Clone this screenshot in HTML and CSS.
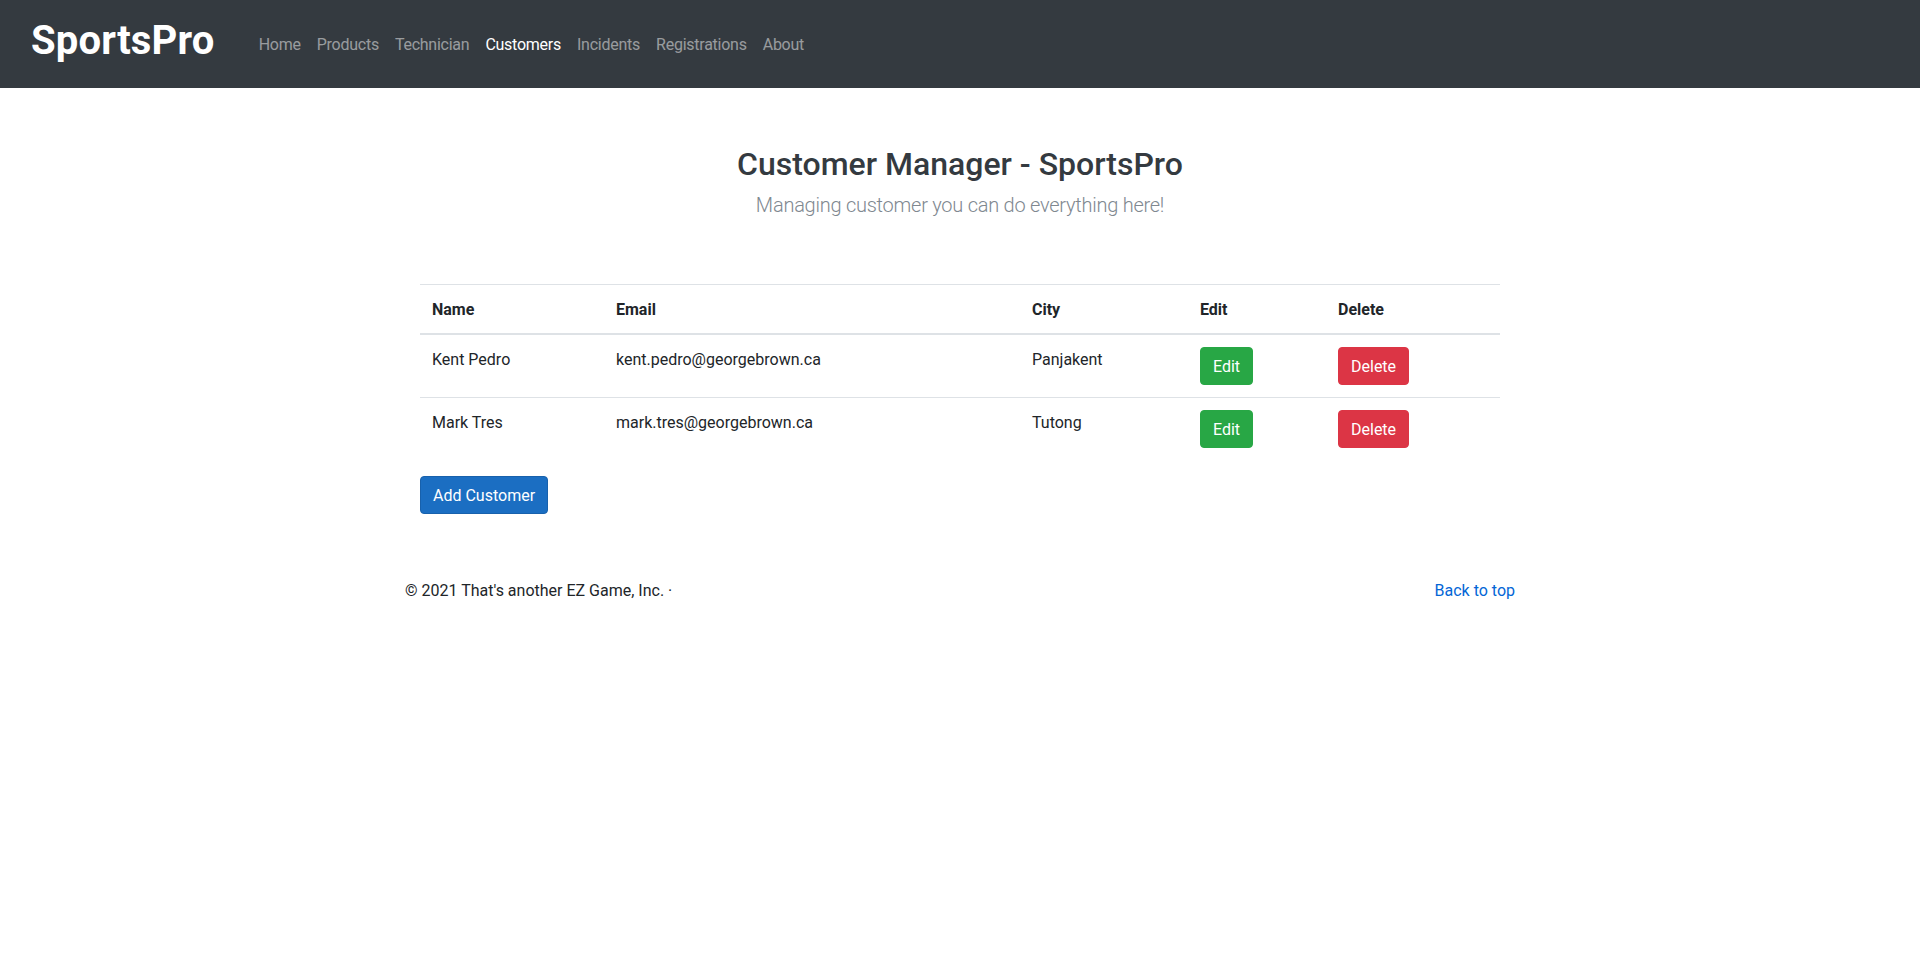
FILE: index.html
```html
<!DOCTYPE html>
<html lang="en">
<head>
<meta charset="utf-8">
<title>Customer Manager - SportsPro</title>
<link rel="stylesheet" href="styles.css">
</head>
<body>
<header class="navbar">
  <a class="brand" href="#">SportsPro</a>
  <nav class="nav">
    <a class="nav-link" href="#">Home</a>
    <a class="nav-link" href="#">Products</a>
    <a class="nav-link" href="#">Technician</a>
    <a class="nav-link active" href="#">Customers</a>
    <a class="nav-link" href="#">Incidents</a>
    <a class="nav-link" href="#">Registrations</a>
    <a class="nav-link" href="#">About</a>
  </nav>
</header>

<main class="container">
  <div class="intro">
    <h2 class="title">Customer Manager - SportsPro</h2>
    <p class="lead">Managing customer you can do everything here!</p>
  </div>

  <div class="content">
    <table class="table">
      <colgroup>
        <col class="c-name"><col class="c-email"><col class="c-city"><col class="c-edit"><col class="c-delete">
      </colgroup>
      <thead>
        <tr><th>Name</th><th>Email</th><th>City</th><th>Edit</th><th>Delete</th></tr>
      </thead>
      <tbody>
        <tr>
          <td>Kent Pedro</td>
          <td>kent.pedro@georgebrown.ca</td>
          <td>Panjakent</td>
          <td><a class="btn btn-success" href="#">Edit</a></td>
          <td><a class="btn btn-danger" href="#">Delete</a></td>
        </tr>
        <tr>
          <td>Mark Tres</td>
          <td>mark.tres@georgebrown.ca</td>
          <td>Tutong</td>
          <td><a class="btn btn-success" href="#">Edit</a></td>
          <td><a class="btn btn-danger" href="#">Delete</a></td>
        </tr>
      </tbody>
    </table>
    <a class="btn btn-primary" href="#">Add Customer</a>
  </div>
</main>

<footer class="container footer">
  <p class="copy">&copy; 2021 That's another EZ Game, Inc. &middot;</p>
  <p class="back"><a href="#">Back to top</a></p>
</footer>
</body>
</html>
```
FILE: styles.css
```css
* { box-sizing: border-box; }

html, body {
  margin: 0;
  padding: 0;
}

body {
  font-family: Roboto, "Liberation Sans", sans-serif;
  font-size: 16px;
  line-height: 1.5;
  color: #212529;
  background: #fff;
}

a { text-decoration: none; }

/* Navbar */
.navbar {
  display: flex;
  align-items: center;
  height: 88px;
  padding: 0 16px 0 31px;
  background: #343a40;
}

.brand {
  font-size: 40px;
  font-weight: 700;
  line-height: 48px;
  color: #fff;
  margin: 0 36px 6px 0;
  letter-spacing: 0.2px;
}

.nav {
  display: flex;
  align-items: center;
}

.nav-link {
  display: block;
  padding: 9px 8px 7px;
  color: rgba(255, 255, 255, 0.5);
  line-height: 24px;
  letter-spacing: -0.25px;
}

.nav-link.active {
  color: #fff;
}

/* Main */
.container {
  width: 1110px;
  margin: 0 auto;
}

.intro {
  text-align: center;
  padding-top: 57px;
}

.title {
  margin: 0 0 7px;
  font-size: 32px;
  font-weight: 500;
  line-height: 1.2;
  color: #343a40;
}

.lead {
  margin: 0;
  font-size: 20px;
  font-weight: 300;
  line-height: 30px;
  letter-spacing: -0.25px;
  color: #808890;
}

.content {
  padding: 64px 15px 0;
}

.table {
  width: 100%;
  table-layout: fixed;
  border-collapse: collapse;
  margin-bottom: 16px;
}

.c-name { width: 184px; }
.c-email { width: 416px; }
.c-city { width: 168px; }
.c-edit { width: 138px; }
.c-delete { width: 174px; }

.table th,
.table td {
  padding: 13px 12px 11px;
  text-align: left;
  vertical-align: top;
  border-top: 1px solid #dee2e6;
}

.table td:nth-child(4),
.table td:nth-child(5) {
  padding-top: 12px;
  padding-bottom: 12px;
}

.table th {
  font-weight: 700;
}

.table thead th {
  border-bottom: 2px solid #dee2e6;
}

/* Buttons */
.btn {
  display: inline-block;
  padding: 7px 12px 5px;
  font-size: 16px;
  line-height: 24px;
  border: 1px solid transparent;
  border-radius: 4px;
  color: #fff;
  vertical-align: top;
}

.btn-success {
  background: #28a745;
  border-color: #28a745;
}

.btn-danger {
  background: #dc3545;
  border-color: #dc3545;
}

.btn-primary {
  background: #1b6ec2;
  border-color: #1861ac;
}

/* Footer */
.footer {
  display: flex;
  justify-content: space-between;
  padding-top: 65px;
}

.footer p {
  margin: 0;
}

.back a {
  color: #0366d6;
}
```
